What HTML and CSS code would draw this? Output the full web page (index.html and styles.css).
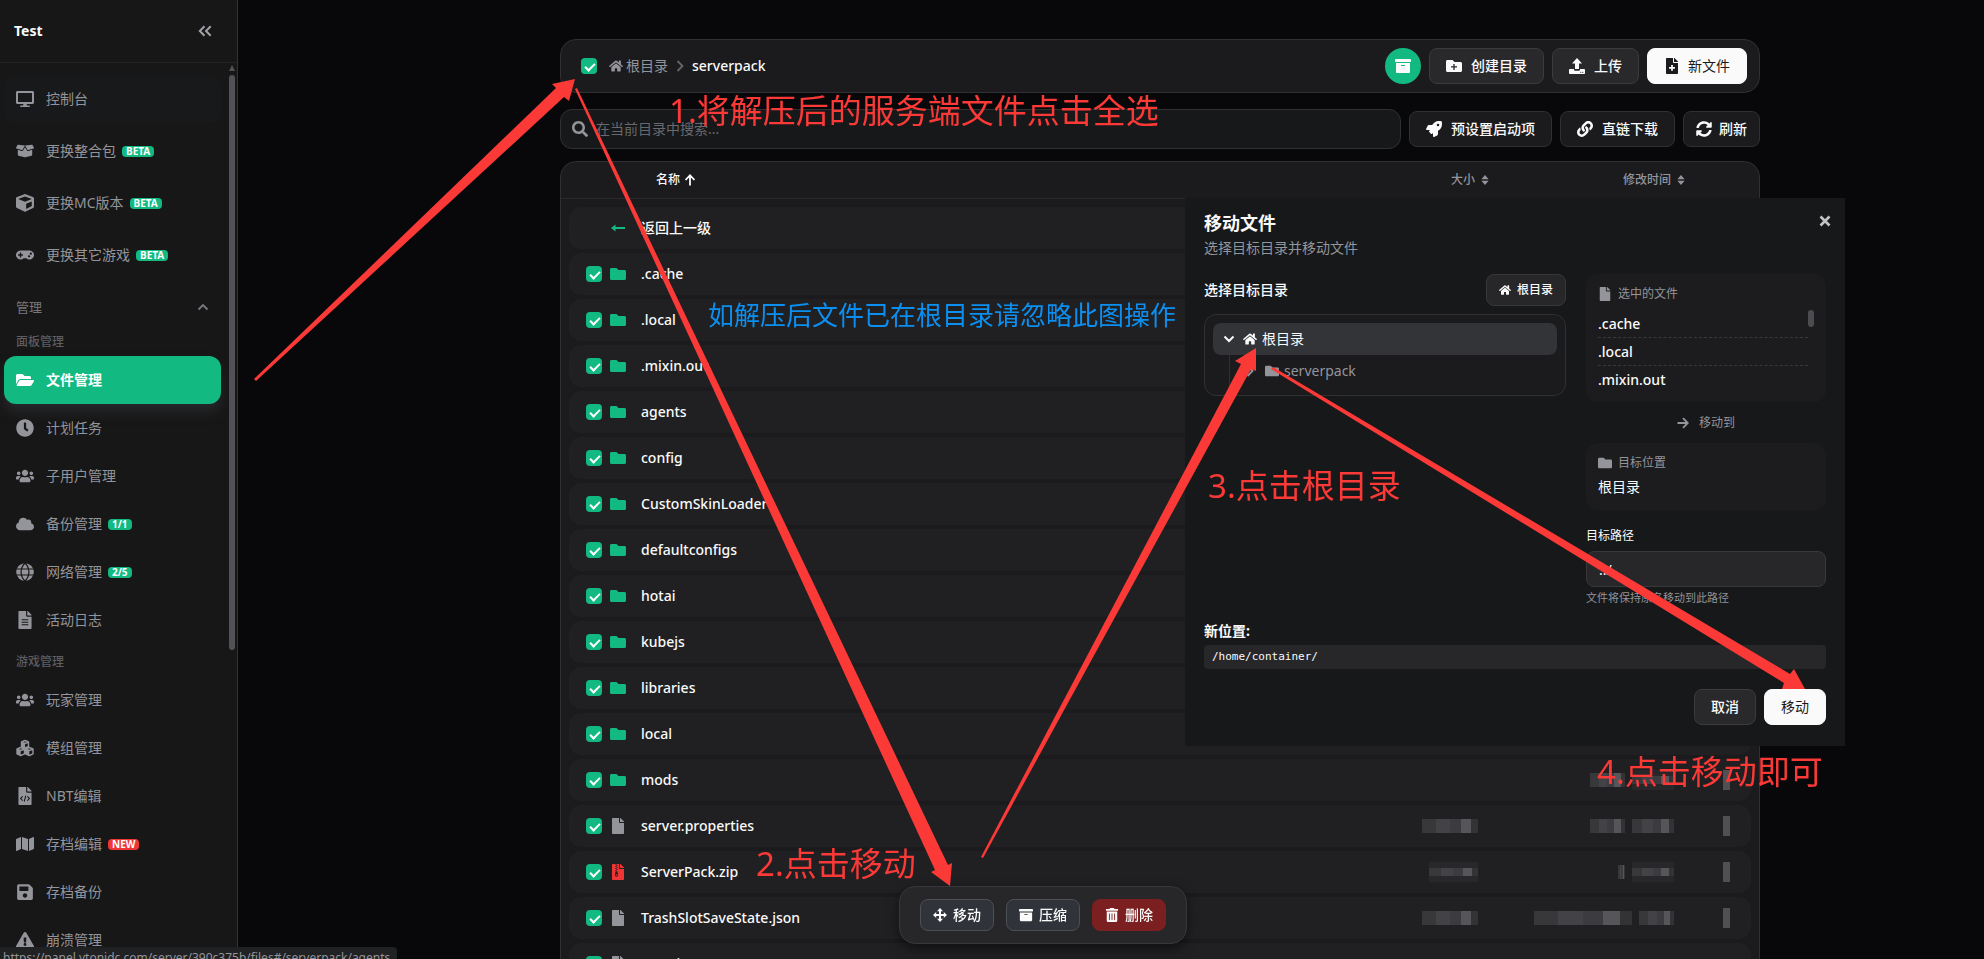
FILE: index.html
```html
<!DOCTYPE html>
<html lang="zh-CN">
<head>
<meta charset="utf-8">
<title>文件管理</title>
<link rel="stylesheet" href="styles.css">
</head>
<body>
<svg class="sprite" aria-hidden="true">
<symbol id="desktop" viewBox="0 0 576 512"><path d="M528 0H48C21.500 0 0 21.500 0 48v320c0 26.500 21.500 48 48 48h192l-16 48h-72c-13.300 0-24 10.700-24 24s10.700 24 24 24h272c13.300 0 24-10.700 24-24s-10.700-24-24-24h-72l-16-48h192c26.500 0 48-21.500 48-48V48c0-26.500-21.500-48-48-48zm-16 352H64V64h448v288z"/></symbol>
<symbol id="box" viewBox="0 0 640 512"><path d="M425.7 256c-16.9 0-32.8-9-41.4-23.400L320 126l-64.200 106.600c-8.700 14.500-24.600 23.500-41.500 23.500-4.500 0-9-.6-13.300-1.900L64 215v178c0 14.700 10 27.500 24.200 31l216.200 54.100c10.200 2.500 20.900 2.500 31 0L551.800 424c14.200-3.600 24.200-16.400 24.200-31V215l-137 39.100c-4.300 1.300-8.800 1.900-13.300 1.900zm212.600-112.200L586.800 41c-3.100-6.200-9.800-9.800-16.700-8.900L320 64l91.700 152.100c3.800 6.300 11.400 9.300 18.500 7.300l197.900-56.500c9.900-2.900 14.700-13.900 10.200-23.100zM53.200 41L1.700 143.800c-4.600 9.200.3 20.200 10.100 23l197.900 56.500c7.100 2 14.700-1 18.500-7.300L320 64 69.800 32.100c-6.900-.8-13.500 2.700-16.600 8.900z"/></symbol>
<symbol id="cube" viewBox="0 0 512 512"><path d="M239.1 6.3l-208 78c-18.700 7-31.100 25-31.100 45v225.100c0 18.200 10.300 34.800 26.500 42.900l208 104c13.500 6.800 29.400 6.800 42.900 0l208-104c16.300-8.100 26.500-24.800 26.500-42.900V129.300c0-20-12.400-37.900-31.100-44.900l-208-78C262 2.200 250 2.200 239.100 6.300zM256 68.400l192 72v1.100l-192 78-192-78v-1.100l192-72zm32 356V275.500l160-65v133.900l-160 80z"/></symbol>
<symbol id="gamepad" viewBox="0 0 640 512"><path d="M480.070 96H160a160 160 0 1 0 114.240 272h91.500A160 160 0 1 0 480.070 96zM248 268a12 12 0 0 1-12 12h-52v52a12 12 0 0 1-12 12h-24a12 12 0 0 1-12-12v-52H84a12 12 0 0 1-12-12v-24a12 12 0 0 1 12-12h52v-52a12 12 0 0 1 12-12h24a12 12 0 0 1 12 12v52h52a12 12 0 0 1 12 12zm216 76a40 40 0 1 1 40-40 40 40 0 0 1-40 40zm64-96a40 40 0 1 1 40-40 40 40 0 0 1-40 40z"/></symbol>
<symbol id="folder-open" viewBox="0 0 576 512"><path d="M572.694 292.093L500.270 416.248A63.997 63.997 0 0 1 444.989 448H45.025c-18.523 0-30.064-20.093-20.731-36.093l72.424-124.155A64 64 0 0 1 152 256h399.964c18.523 0 30.064 20.093 20.730 36.093zM152 224h328v-48c0-26.510-21.490-48-48-48H272l-64-64H48C21.490 64 0 85.490 0 112v278.046l69.077-118.418C86.214 242.250 117.989 224 152 224z"/></symbol>
<symbol id="clock" viewBox="0 0 512 512"><path d="M256,8C119,8,8,119,8,256S119,504,256,504,504,393,504,256,393,8,256,8Zm92.490,313h0l-20,25a16,16,0,0,1-22.490,2.500h0l-67-49.720a40,40,0,0,1-15-31.230V112a16,16,0,0,1,16-16h32a16,16,0,0,1,16,16V256l58,42.500A16,16,0,0,1,348.490,321Z"/></symbol>
<symbol id="users" viewBox="0 0 640 512"><path d="M96 224c35.300 0 64-28.700 64-64s-28.700-64-64-64-64 28.700-64 64 28.700 64 64 64zm448 0c35.300 0 64-28.700 64-64s-28.700-64-64-64-64 28.700-64 64 28.700 64 64 64zm32 32h-64c-17.600 0-33.500 7.100-45.100 18.600 40.300 22.100 68.900 62 75.100 109.400h66c17.700 0 32-14.300 32-32v-32c0-35.300-28.700-64-64-64zm-256 0c61.900 0 112-50.100 112-112S381.900 32 320 32 208 82.100 208 144s50.100 112 112 112zm76.800 32h-8.300c-20.800 10-43.900 16-68.500 16s-47.600-6-68.500-16h-8.300C179.600 288 128 339.600 128 403.200V432c0 26.500 21.500 48 48 48h288c26.500 0 48-21.500 48-48v-28.800c0-63.600-51.600-115.200-115.200-115.200zm-223.700-13.400C161.500 263.100 145.600 256 128 256H64c-35.300 0-64 28.700-64 64v32c0 17.700 14.300 32 32 32h65.900c6.300-47.400 34.900-87.300 75.200-109.400z"/></symbol>
<symbol id="cloud" viewBox="0 0 640 512"><path d="M537.6 226.600c4.100-10.700 6.400-22.400 6.400-34.600 0-53-43-96-96-96-19.700 0-38.100 6-53.300 16.200C367 64.200 315.300 32 256 32c-88.400 0-160 71.600-160 160 0 2.700.1 5.400.2 8.100C40.200 219.800 0 273.200 0 336c0 79.500 64.500 144 144 144h368c70.700 0 128-57.300 128-128 0-61.900-44-113.600-102.400-125.400z"/></symbol>
<symbol id="globe" viewBox="0 0 18 18"><circle cx="9" cy="9" r="8.800"/><path d="M0 6h18M0 12h18M9 0C3.800 5 3.800 13 9 18M9 0c5.200 5 5.200 13 0 18" fill="none" stroke="#171717" stroke-width="1.200"/></symbol>
<symbol id="file" viewBox="0 0 384 512"><path d="M224 136V0H24C10.700 0 0 10.700 0 24v464c0 13.300 10.700 24 24 24h336c13.300 0 24-10.700 24-24V160H248c-13.200 0-24-10.800-24-24zm160-14.100v6.100H256V0h6.100c6.400 0 12.500 2.500 17 7l97.900 98c4.500 4.500 7 10.600 7 16.900z"/></symbol>
<symbol id="file-text" viewBox="0 0 384 512"><use href="#file" width="384" height="512"/><path d="M96 248h192M96 320h192M96 392h192" fill="none" stroke="#171717" stroke-width="32"/></symbol>
<symbol id="file-code" viewBox="0 0 384 512"><use href="#file" width="384" height="512"/><path d="M125 270l-60 60 60 60M259 270l60 60-60 60M215 245l-46 170" fill="none" stroke="#171717" stroke-width="30"/></symbol>
<symbol id="file-plus" viewBox="0 0 384 512"><use href="#file" width="384" height="512"/><path d="M192 220v190M97 315h190" fill="none" stroke="#fafafa" stroke-width="56"/></symbol>
<symbol id="file-zip" viewBox="0 0 384 512"><use href="#file" width="384" height="512"/><path d="M128 0v32M160 32v32M128 64v32M160 96v32M128 128v32M160 160v32M128 192v32" fill="none" stroke="#202022" stroke-width="36"/><path d="M115 235h56l24 110a52 52 0 1 1-102 0zM142 325a32 22 0 1 0 1 0z" fill="#202022" fill-rule="evenodd"/></symbol>
<symbol id="cubes" viewBox="0 0 18 18"><g fill="none" stroke="currentColor" stroke-width="1.400" stroke-linejoin="round"><path d="M5.500 3L9 1.500 12.500 3v4.500L9 9 5.500 7.500zM5.500 3L9 4.500 12.500 3"/><path d="M1 10l3.700-1.500L8.500 10v4.800l-3.800 1.700L1 14.800zM1 10l3.700 1.500L8.500 10"/><path d="M9.500 10l3.800-1.500L17 10v4.800l-3.700 1.700-3.800-1.700zM9.500 10l3.800 1.500L17 10"/></g><path d="M5.500 3L9 4.500V9L5.500 7.500zM1 10l3.700 1.500v5L1 14.800zM9.500 10l3.800 1.500v5l-3.800-1.700z"/></symbol>
<symbol id="map" viewBox="0 0 576 512"><path d="M0 117.660v346.320c0 11.320 11.430 19.060 21.940 14.860L160 416V32L20.120 87.950A32.006 32.006 0 0 0 0 117.660zM192 416l192 64V96L192 32v384zM554.060 33.160L416 96v384l139.880-55.950A31.996 31.996 0 0 0 576 394.340V48.020c0-11.320-11.430-19.060-21.940-14.860z"/></symbol>
<symbol id="save" viewBox="0 0 448 512"><path d="M433.941 129.941l-83.882-83.882A48 48 0 0 0 316.118 32H48C21.490 32 0 53.490 0 80v352c0 26.510 21.490 48 48 48h352c26.510 0 48-21.490 48-48V163.882a48 48 0 0 0-14.059-33.941zM224 416c-35.346 0-64-28.654-64-64 0-35.346 28.654-64 64-64s64 28.654 64 64c0 35.346-28.654 64-64 64zm96-304.520V212c0 6.627-5.373 12-12 12H76c-6.627 0-12-5.373-12-12V108c0-6.627 5.373-12 12-12h228.520c3.183 0 6.235 1.264 8.485 3.515l3.480 3.480A11.996 11.996 0 0 1 320 111.480z"/></symbol>
<symbol id="warn" viewBox="0 0 576 512"><path d="M569.517 440.013C587.975 472.007 564.806 512 527.940 512H48.054c-36.937 0-59.999-40.055-41.577-71.987L246.423 23.985c18.467-32.009 64.720-31.951 83.154 0l239.940 416.028zM288 354c-25.405 0-46 20.595-46 46s20.595 46 46 46 46-20.595 46-46-20.595-46-46-46zm-43.673-165.346l7.418 136c.347 6.364 5.609 11.346 11.982 11.346h48.546c6.373 0 11.635-4.982 11.982-11.346l7.418-136c.375-6.874-5.098-12.654-11.982-12.654h-63.383c-6.884 0-12.356 5.780-11.981 12.654z"/></symbol>
<symbol id="folder" viewBox="0 0 512 512"><path d="M464 128H272l-64-64H48C21.490 64 0 85.490 0 112v288c0 26.510 21.490 48 48 48h416c26.510 0 48-21.490 48-48V176c0-26.510-21.490-48-48-48z"/></symbol>
<symbol id="folder-plus" viewBox="0 0 512 512"><use href="#folder" width="512" height="512"/><path d="M256 190v192M160 286h192" fill="none" stroke="#29292c" stroke-width="42"/></symbol>
<symbol id="home" viewBox="0 0 576 512"><path d="M280.370 148.260L96 300.110V464a16 16 0 0 0 16 16l112.060-.29a16 16 0 0 0 15.920-16V368a16 16 0 0 1 16-16h64a16 16 0 0 1 16 16v95.640a16 16 0 0 0 16 16.050L464 480a16 16 0 0 0 16-16V300L295.670 148.260a12.190 12.190 0 0 0-15.300 0zM571.600 251.470L488 182.560V44.050a12 12 0 0 0-12-12h-56a12 12 0 0 0-12 12v72.610L318.470 43a48 48 0 0 0-61 0L4.340 251.470a12 12 0 0 0-1.600 16.900l25.500 31A12 12 0 0 0 45.150 301l235.220-193.740a12.190 12.190 0 0 1 15.300 0L530.900 301a12 12 0 0 0 16.900-1.600l25.500-31a12 12 0 0 0-1.700-16.930z"/></symbol>
<symbol id="archive" viewBox="0 0 512 512"><path d="M32 448c0 17.700 14.300 32 32 32h384c17.700 0 32-14.300 32-32V160H32v288zm160-212c0-6.600 5.400-12 12-12h104c6.600 0 12 5.400 12 12v8c0 6.600-5.400 12-12 12H204c-6.600 0-12-5.400-12-12v-8zM480 32H32C14.300 32 0 46.300 0 64v48c0 8.800 7.200 16 16 16h480c8.800 0 16-7.200 16-16V64c0-17.700-14.300-32-32-32z"/></symbol>
<symbol id="search" viewBox="0 0 512 512"><path d="M505 442.700L405.300 343c-4.500-4.500-10.600-7-17-7H372c27.600-35.300 44-79.700 44-128C416 93.100 322.900 0 208 0S0 93.100 0 208s93.100 208 208 208c48.300 0 92.700-16.400 128-44v16.300c0 6.400 2.500 12.500 7 17l99.700 99.700c9.400 9.400 24.600 9.400 33.900 0l28.300-28.300c9.400-9.400 9.400-24.600.1-34zM208 336c-70.700 0-128-57.200-128-128 0-70.700 57.200-128 128-128 70.700 0 128 57.200 128 128 0 70.700-57.200 128-128 128z"/></symbol>
<symbol id="upload" viewBox="0 0 16 16"><path d="M8 0l5 5.500H10V11H6V5.500H3zM.8 11H5v.8a1 1 0 0 0 1 1h4a1 1 0 0 0 1-1V11h4.200a.8.800 0 0 1 .8.800v3.400a.8.800 0 0 1-.8.800H.8a.8.800 0 0 1-.8-.8v-3.400A.8.800 0 0 1 .8 11zm11 2.700a.6.600 0 1 0 .01 0zm2 0a.6.600 0 1 0 .01 0z"/></symbol>
<symbol id="rocket" viewBox="0 0 512 512"><path d="M505.120 19.094c-1.189-5.531-6.658-11-12.207-12.188C460.716 0 435.507 0 410.407 0 307.175 0 245.269 55.203 199.052 128H94.838c-16.348.016-35.557 11.875-42.887 26.484L2.516 253.297A28.400 28.400 0 0 0 0 264a24 24 0 0 0 24 24h103.816l-22.475 22.469c-11.365 11.361-12.996 32.258 0 45.250l50.905 50.906c11.156 11.188 32.156 13.156 45.277 0l22.475-22.469V488a24 24 0 0 0 24 24 28.560 28.560 0 0 0 10.707-2.516l98.728-49.390c14.629-7.297 26.508-26.500 26.508-42.860V312.797c72.598-46.313 128.035-108.406 128.035-211.094.1-25.203.1-50.406-6.856-82.609zM384.040 168A40 40 0 1 1 424.050 128 40 40 0 0 1 384.040 168z"/></symbol>
<symbol id="link" viewBox="0 0 512 512"><path d="M326.612 185.391c59.747 59.809 58.927 155.698.36 214.590-.11.12-.24.25-.36.37l-67.200 67.200c-59.270 59.270-155.699 59.262-214.960 0-59.270-59.260-59.270-155.700 0-214.960l37.106-37.106c9.840-9.840 26.786-3.300 27.294 10.606.648 17.722 3.826 35.527 9.690 52.721 1.986 5.822.567 12.262-3.783 16.612l-13.087 13.087c-28.026 28.026-28.905 73.660-1.155 101.960 28.024 28.579 74.086 28.749 102.325.51l67.200-67.190c28.191-28.191 28.073-73.757 0-101.830-3.701-3.694-7.429-6.564-10.341-8.569a16.037 16.037 0 0 1-6.947-12.606c-.396-10.567 3.348-21.456 11.698-29.806l21.054-21.055c5.521-5.521 14.182-6.199 20.584-1.731a152.482 152.482 0 0 1 20.522 17.197zM467.547 44.449c-59.261-59.262-155.690-59.270-214.960 0l-67.200 67.200c-.12.12-.25.25-.36.37-58.566 58.892-59.387 154.781.36 214.590a152.454 152.454 0 0 0 20.521 17.196c6.402 4.468 15.064 3.789 20.584-1.731l21.054-21.055c8.350-8.350 12.094-19.239 11.698-29.806a16.037 16.037 0 0 0-6.947-12.606c-2.912-2.005-6.640-4.875-10.341-8.569-28.073-28.073-28.191-73.639 0-101.830l67.200-67.190c28.239-28.239 74.300-28.069 102.325.51 27.750 28.300 26.872 73.934-1.155 101.960l-13.087 13.087c-4.350 4.350-5.769 10.790-3.783 16.612 5.864 17.194 9.042 34.999 9.690 52.721.509 13.906 17.454 20.446 27.294 10.606l37.106-37.106c59.271-59.259 59.271-155.699.001-214.959z"/></symbol>
<symbol id="sync" viewBox="0 0 512 512"><path d="M370.720 133.280C339.458 104.008 298.888 87.962 255.848 88c-77.458.068-144.328 53.178-162.791 126.850-1.344 5.363-6.122 9.150-11.651 9.150H24.103c-7.498 0-13.194-6.807-11.807-14.176C33.933 94.924 134.813 8 256 8c66.448 0 126.791 26.136 171.315 68.685L463.030 40.970C478.149 25.851 504 36.559 504 57.941V192c0 13.255-10.745 24-24 24H345.941c-21.382 0-32.090-25.851-16.971-40.971l41.750-41.749zM32 296h134.059c21.382 0 32.090 25.851 16.971 40.971l-41.750 41.750c31.262 29.273 71.835 45.319 114.876 45.280 77.418-.07 144.315-53.144 162.787-126.849 1.344-5.363 6.122-9.150 11.651-9.150h57.304c7.498 0 13.194 6.807 11.807 14.176C478.067 417.076 377.187 504 256 504c-66.448 0-126.791-26.136-171.315-68.685L48.970 471.030C33.851 486.149 8 475.441 8 454.059V320c0-13.255 10.745-24 24-24z"/></symbol>
<symbol id="trash" viewBox="0 0 448 512"><path d="M32 464a48 48 0 0 0 48 48h288a48 48 0 0 0 48-48V128H32zm272-256a16 16 0 0 1 32 0v224a16 16 0 0 1-32 0zm-96 0a16 16 0 0 1 32 0v224a16 16 0 0 1-32 0zm-96 0a16 16 0 0 1 32 0v224a16 16 0 0 1-32 0zM432 32H312l-9.400-18.700A24 24 0 0 0 281.100 0H166.800a23.720 23.720 0 0 0-21.400 13.300L136 32H16A16 16 0 0 0 0 48v32a16 16 0 0 0 16 16h416a16 16 0 0 0 16-16V48a16 16 0 0 0-16-16z"/></symbol>
<symbol id="move" viewBox="0 0 14 14"><path d="M7 0l3 3.200H8v2.800h2.800V4L14 7l-3.200 3V8H8v2.800h2L7 14l-3-3.200h2V8H3.200v2L0 7l3.200-3v2H6V3.200H4z"/></symbol>
<symbol id="sort" viewBox="0 0 8 10"><path d="M4 0l3.600 4.200H.4zM4 10L.4 5.800h7.200z"/></symbol>
<symbol id="arrow-up" viewBox="0 0 12 12"><path d="M6 11.500V1.500M1.500 6L6 1.300 10.500 6" fill="none" stroke="currentColor" stroke-width="1.800"/></symbol>
<symbol id="arrow-right" viewBox="0 0 12 12"><path d="M.5 6h10M6 1.200L10.800 6 6 10.800" fill="none" stroke="currentColor" stroke-width="1.800"/></symbol>
<symbol id="arrow-back" viewBox="0 0 16 16"><path d="M5.500 4.500v2.400H15v2.200H5.500v2.400L1 8z"/></symbol>
<symbol id="chev-right" viewBox="0 0 8 12"><path d="M1.500 1l5 5-5 5" fill="none" stroke="currentColor" stroke-width="1.800"/></symbol>
<symbol id="chev-down" viewBox="0 0 12 8"><path d="M1.500 1.500L6 6l4.500-4.500" fill="none" stroke="currentColor" stroke-width="2"/></symbol>
<symbol id="chev-up" viewBox="0 0 12 8"><path d="M1.500 6.500L6 2l4.500 4.500" fill="none" stroke="currentColor" stroke-width="1.800"/></symbol>
<symbol id="collapse" viewBox="0 0 14 12"><path d="M6.500 1.200L1.800 6l4.700 4.800M12.700 1.200L8 6l4.700 4.800" fill="none" stroke="currentColor" stroke-width="2"/></symbol>
<symbol id="close" viewBox="0 0 12 12"><path d="M1.500 1.500l9 9M10.500 1.500l-9 9" fill="none" stroke="currentColor" stroke-width="2.600"/></symbol>
</svg>

<aside class="sidebar">
  <header class="side-head"><strong>Test</strong><button class="plain" aria-label="收起"><svg class="i-collapse"><use href="#collapse"/></svg></button></header>
  <nav class="nav">
    <div class="group group-top">
      <a class="item hover" href="#"><svg><use href="#desktop"/></svg>控制台</a>
      <a class="item" href="#"><svg><use href="#box"/></svg>更换整合包<span class="tag">BETA</span></a>
      <a class="item" href="#"><svg><use href="#cube"/></svg>更换MC版本<span class="tag">BETA</span></a>
      <a class="item" href="#"><svg><use href="#gamepad"/></svg>更换其它游戏<span class="tag">BETA</span></a>
    </div>
    <button class="section">管理<svg><use href="#chev-up"/></svg></button>
    <h2 class="label">面板管理</h2>
    <div class="group">
      <a class="item active" href="#"><svg><use href="#folder-open"/></svg>文件管理</a>
      <a class="item" href="#"><svg><use href="#clock"/></svg>计划任务</a>
      <a class="item" href="#"><svg><use href="#users"/></svg>子用户管理</a>
      <a class="item" href="#"><svg><use href="#cloud"/></svg>备份管理<span class="tag">1/1</span></a>
      <a class="item" href="#"><svg><use href="#globe"/></svg>网络管理<span class="tag">2/5</span></a>
      <a class="item" href="#"><svg><use href="#file-text"/></svg>活动日志</a>
    </div>
    <h2 class="label second">游戏管理</h2>
    <div class="group">
      <a class="item" href="#"><svg><use href="#users"/></svg>玩家管理</a>
      <a class="item" href="#"><svg><use href="#cubes"/></svg>模组管理</a>
      <a class="item" href="#"><svg><use href="#file-code"/></svg>NBT编辑</a>
      <a class="item" href="#"><svg><use href="#map"/></svg>存档编辑<span class="tag new">NEW</span></a>
      <a class="item" href="#"><svg><use href="#save"/></svg>存档备份</a>
      <a class="item" href="#"><svg><use href="#warn"/></svg>崩溃管理</a>
    </div>
  </nav>
  <div class="scroll"></div>
</aside>

<main class="main">
  <div class="container">
    <section class="toolbar">
      <input type="checkbox" class="check" checked aria-label="全选">
      <nav class="crumbs"><a href="#"><svg class="i-home"><use href="#home"/></svg>根目录</a><svg class="i-sep"><use href="#chev-right"/></svg><span>serverpack</span></nav>
      <button class="round" aria-label="归档"><svg><use href="#archive"/></svg></button>
      <button class="btn"><svg><use href="#folder-plus"/></svg>创建目录</button>
      <button class="btn"><svg><use href="#upload"/></svg>上传</button>
      <button class="btn light"><svg><use href="#file-plus"/></svg>新文件</button>
    </section>
    <section class="filters">
      <label class="search"><svg><use href="#search"/></svg><input type="text" placeholder="在当前目录中搜索..." aria-label="搜索"></label>
      <button class="btn dark"><svg><use href="#rocket"/></svg>预设置启动项</button>
      <button class="btn dark"><svg><use href="#link"/></svg>直链下载</button>
      <button class="btn dark tight"><svg><use href="#sync"/></svg>刷新</button>
    </section>
    <table class="files">
      <thead><tr><th class="on">名称<svg class="i-up"><use href="#arrow-up"/></svg></th><th>大小<svg><use href="#sort"/></svg></th><th>修改时间<svg><use href="#sort"/></svg></th><th></th></tr></thead>
      <tbody>
        <tr><td><span class="gap"></span><svg class="green"><use href="#arrow-back"/></svg><a href="#">返回上一级</a></td></tr>
        <tr><td><input type="checkbox" class="check" checked aria-label=".cache"><svg class="green"><use href="#folder"/></svg><a href="#">.cache</a></td></tr>
        <tr><td><input type="checkbox" class="check" checked aria-label=".local"><svg class="green"><use href="#folder"/></svg><a href="#">.local</a></td></tr>
        <tr><td><input type="checkbox" class="check" checked aria-label=".mixin.out"><svg class="green"><use href="#folder"/></svg><a href="#">.mixin.out</a></td></tr>
        <tr><td><input type="checkbox" class="check" checked aria-label="agents"><svg class="green"><use href="#folder"/></svg><a href="#">agents</a></td></tr>
        <tr><td><input type="checkbox" class="check" checked aria-label="config"><svg class="green"><use href="#folder"/></svg><a href="#">config</a></td></tr>
        <tr><td><input type="checkbox" class="check" checked aria-label="CustomSkinLoader"><svg class="green"><use href="#folder"/></svg><a href="#">CustomSkinLoader</a></td></tr>
        <tr><td><input type="checkbox" class="check" checked aria-label="defaultconfigs"><svg class="green"><use href="#folder"/></svg><a href="#">defaultconfigs</a></td></tr>
        <tr><td><input type="checkbox" class="check" checked aria-label="hotai"><svg class="green"><use href="#folder"/></svg><a href="#">hotai</a></td></tr>
        <tr><td><input type="checkbox" class="check" checked aria-label="kubejs"><svg class="green"><use href="#folder"/></svg><a href="#">kubejs</a></td></tr>
        <tr><td><input type="checkbox" class="check" checked aria-label="libraries"><svg class="green"><use href="#folder"/></svg><a href="#">libraries</a></td></tr>
        <tr><td><input type="checkbox" class="check" checked aria-label="local"><svg class="green"><use href="#folder"/></svg><a href="#">local</a></td></tr>
        <tr><td><input type="checkbox" class="check" checked aria-label="mods"><svg class="green"><use href="#folder"/></svg><a href="#">mods</a></td><td></td><td><i class="blur w35"></i><i class="blur w42 mid"></i></td><td><i class="blur dots"></i></td></tr>
        <tr><td><input type="checkbox" class="check" checked aria-label="server.properties"><svg><use href="#file"/></svg><a href="#">server.properties</a></td><td><i class="blur w56"></i></td><td><i class="blur w35"></i><i class="blur w42"></i></td><td><i class="blur dots"></i></td></tr>
        <tr><td><input type="checkbox" class="check" checked aria-label="ServerPack.zip"><svg class="red"><use href="#file-zip"/></svg><a href="#">ServerPack.zip</a></td><td><i class="blur w49 mid"></i></td><td><i class="blur w7"></i><i class="blur w42 mid"></i></td><td><i class="blur dots"></i></td></tr>
        <tr><td><input type="checkbox" class="check" checked aria-label="TrashSlotSaveState.json"><svg><use href="#file"/></svg><a href="#">TrashSlotSaveState.json</a></td><td><i class="blur w56"></i></td><td><i class="blur w98"></i><i class="blur w35"></i></td><td><i class="blur dots"></i></td></tr>
        <tr><td><input type="checkbox" class="check" checked aria-label="user_jvm_args.txt"><svg><use href="#file"/></svg><a href="#">user_jvm_args.txt</a></td></tr>
      </tbody>
    </table>
  </div>
</main>

<div class="actions">
  <button class="act"><svg><use href="#move"/></svg>移动</button>
  <button class="act"><svg><use href="#archive"/></svg>压缩</button>
  <button class="act danger"><svg><use href="#trash"/></svg>删除</button>
</div>

<section class="modal" role="dialog" aria-labelledby="modal-title">
  <header class="modal-head">
    <div><h1 id="modal-title">移动文件</h1><p>选择目标目录并移动文件</p></div>
    <button class="plain" aria-label="关闭"><svg class="i-close"><use href="#close"/></svg></button>
  </header>
  <div class="cols">
    <div>
      <div class="pick"><span>选择目标目录</span><button class="act home"><svg><use href="#home"/></svg>根目录</button></div>
      <ul class="tree">
        <li><button class="node on"><svg class="i-chev"><use href="#chev-down"/></svg><svg><use href="#home"/></svg>根目录</button>
          <ul><li><button class="node"><svg class="i-next"><use href="#chev-right"/></svg><svg><use href="#folder"/></svg>serverpack</button></li></ul></li>
      </ul>
    </div>
    <div class="side">
      <div class="card">
        <h3><svg><use href="#file"/></svg>选中的文件</h3>
        <ul class="picked"><li>.cache</li><li>.local</li><li>.mixin.out</li></ul>
      </div>
      <p class="to"><svg><use href="#arrow-right"/></svg>移动到</p>
      <div class="card target"><h3><svg><use href="#folder"/></svg>目标位置</h3><p>根目录</p></div>
      <label class="path-label" for="path">目标路径</label>
      <input class="path" id="path" type="text" value="../">
      <p class="help">文件将保持原名移动到此路径</p>
    </div>
  </div>
  <h4>新位置:</h4>
  <code>/home/container/</code>
  <footer><button class="btn">取消</button><button class="btn light">移动</button></footer>
</section>

<div class="status">https://panel.ytonidc.com/server/390c375b/files#/serverpack/agents</div>

<svg class="arrows" aria-hidden="true">
  <path d="M254 379L556 88 552 84 575 79 569 101 564 97 256 381z"/>
  <path d="M577 88L948 865 952 863 950 886 931 872 935 870 575 89z"/>
  <path d="M981 857L1241 364 1235 361 1256 348 1256 371 1251 369 983 858z"/>
  <path d="M1273 367L1790 674 1794 669 1805 689 1782 689 1784 683 1271 369z"/>
</svg>
<p class="note n1">1.将解压后的服务端文件点击全选</p>
<p class="note n2">2.点击移动</p>
<p class="note n3">3.点击根目录</p>
<p class="note n4">4.点击移动即可</p>
<p class="note tip">如解压后文件已在根目录请忽略此图操作</p>
</body>
</html>
```
FILE: styles.css
```css
* { box-sizing: border-box; }
body, h1, h2, h3, h4, p, ul { margin: 0; padding: 0; }
ul { list-style: none; }
body {
  display: flex;
  height: 100vh;
  overflow: hidden;
  background: #08080a;
  color: #fafafa;
  font: 14px/20px "Noto Sans", "Noto Sans CJK SC", sans-serif;
}
a { color: inherit; text-decoration: none; }
button, input { font: inherit; color: inherit; margin: 0; }
svg { fill: currentColor; flex: none; }
.sprite { position: absolute; width: 0; height: 0; }
.plain { border: 0; padding: 0; background: none; color: #a1a1aa; display: flex; }

/* sidebar */
.sidebar {
  position: relative;
  flex: none;
  display: flex;
  flex-direction: column;
  width: 238px;
  background: #171717;
  border-right: 1px solid #323236;
}
.side-head {
  flex: none;
  display: flex;
  align-items: center;
  justify-content: space-between;
  height: 63px;
  padding: 0 25px 0 14px;
  border-bottom: 1px solid #222225;
}
.i-collapse { width: 14px; height: 12px; }
.nav { flex: 1; overflow: hidden; padding: 12px 16px 0 4px; }
.group { display: flex; flex-direction: column; }
.group-top { gap: 4px; }
.item {
  flex: none;
  display: flex;
  align-items: center;
  height: 48px;
  padding-left: 12px;
  border-radius: 12px;
  color: #94949b;
}
.item svg { width: 18px; height: 18px; margin-right: 12px; }
.hover { background: #17191a; }
.active { background: #12b981; color: #fff; font-weight: 700; box-shadow: 0 8px 12px #26272a; }
.tag {
  margin-left: 6px;
  padding: 0 4px;
  border-radius: 4px;
  background: #12b981;
  color: #fff;
  font-size: 10px;
  line-height: 11px;
  font-weight: 700;
}
.new { background: #f03535; }
.section {
  display: flex;
  align-items: center;
  justify-content: space-between;
  width: 100%;
  height: 28px;
  margin-top: 14px;
  padding: 0 12px;
  border: 0;
  background: none;
  color: #77777d;
  font-size: 13px;
}
.section svg { width: 12px; height: 8px; }
.label { height: 16px; margin: 13px 0 6px; padding-left: 12px; font-size: 12px; line-height: 16px; font-weight: 500; color: #5c5c62; }
.second { margin: 10px 0 6px; }
.scroll { position: absolute; top: 75px; right: 2px; width: 6px; height: 60%; border-radius: 3px; background: #525256; }
.scroll::before { content: ""; position: absolute; top: -10px; border: 3px solid transparent; border-top: 0; border-bottom: 6px solid #525256; }

/* file manager */
.main { flex: 1; padding: 39px 24px 0 122px; overflow: hidden; }
.container { max-width: 1200px; margin: 0 auto; }
.toolbar {
  display: flex;
  align-items: center;
  gap: 8px;
  height: 54px;
  padding: 0 12px 0 20px;
  border: 1px solid #303033;
  border-radius: 16px;
  background: #1b1b1d;
}
.check {
  appearance: none;
  position: relative;
  flex: none;
  width: 16px;
  height: 16px;
  border-radius: 4px;
  background: #12b981;
}
.check::after {
  content: "";
  position: absolute;
  left: 6px;
  top: 3px;
  width: 4px;
  height: 8px;
  border: solid #fff;
  border-width: 0 2px 2px 0;
  transform: rotate(45deg);
}
.crumbs { flex: 1; display: flex; align-items: center; gap: 8px; margin-left: 4px; }
.crumbs span { font-weight: 500; }
.crumbs a { display: flex; align-items: center; gap: 3px; color: #94949b; }
.crumbs .i-sep { color: #66666c; }
.i-home { width: 14px; height: 14px; }
.i-sep { width: 8px; height: 12px; }
.btn {
  display: flex;
  align-items: center;
  gap: 9px;
  height: 36px;
  padding: 0 16px;
  border: 1px solid #3b3b3f;
  border-radius: 8px;
  background: #29292c;
  font-weight: 500;
  white-space: nowrap;
}
.btn svg { width: 16px; height: 16px; }
.light { gap: 8px; background: #fafafa; border-color: #fafafa; color: #1b1b1d; font-weight: 400; }
.dark { background: #1b1b1d; border-color: #303033; }
.tight { padding: 0 12px; gap: 7px; }
.round { display: flex; padding: 10px; border: 0; border-radius: 50%; background: #12b981; }
.round svg { width: 16px; height: 16px; }
.filters { display: flex; align-items: center; gap: 8px; margin: 16px 0 12px; }
.search {
  flex: 1;
  display: flex;
  align-items: center;
  gap: 8px;
  height: 40px;
  padding: 0 11px;
  border: 1px solid #303033;
  border-radius: 12px;
  background: #17181a;
  color: #94949b;
}
.search svg { width: 16px; height: 16px; }
.search input { flex: 1; border: 0; padding: 0; background: none; outline: 0; }
.search input::placeholder { color: #68686e; opacity: 1; }
.files { display: block; border: 1px solid #303033; border-radius: 16px 16px 0 0; background: #1b1b1d; }
.files thead, .files tbody { display: block; }
.files tr { display: grid; grid-template-columns: 1fr 200px 196px 77px; align-items: center; }
.files thead tr { height: 37px; padding: 0 0 0 95px; border-bottom: 1px solid #29292c; grid-template-columns: 1fr 200px 196px 74px; }
.files th { display: flex; align-items: center; justify-content: flex-end; gap: 6px; padding: 0; font-size: 12px; font-weight: 500; color: #94949b; }
.files th svg { width: 8px; height: 10px; }
.files .on { justify-content: flex-start; gap: 4px; color: #fafafa; }
.files .on svg { width: 12px; height: 12px; }
.files tbody { padding: 8px; }
.files tbody tr { height: 42px; margin-bottom: 4px; border-radius: 12px; background: #202022; }
.files td { display: flex; align-items: center; justify-content: flex-end; gap: 7px; padding: 0; }
.files td:first-child { justify-content: flex-start; gap: 8px; padding-left: 17px; }
.files td svg { width: 16px; height: 16px; color: #94949b; }
.files td .green { color: #12b981; }
.files td .red { color: #f03535; }
.files a { margin-left: 7px; font-weight: 500; }
.gap { width: 16px; }
.blur { height: 14px; background: linear-gradient(90deg, #38383b 0 25%, #434347 25% 50%, #3c3c40 50% 70%, #56565a 70% 88%, #333336 88%); }
.mid { height: 20px; border: solid #28282b; border-width: 6px 0; }
.w7 { width: 7px; }
.w35 { width: 35px; }
.w42 { width: 42px; }
.w49 { width: 49px; }
.w56 { width: 56px; }
.w98 { width: 98px; }
.dots { width: 7px; height: 20px; margin-right: 21px; background: #505054; }

/* bulk actions */
.actions {
  position: fixed;
  left: 899px;
  bottom: 15px;
  display: flex;
  gap: 12px;
  padding: 12px 20px;
  border: 1px solid #38383c;
  border-radius: 16px;
  background: #27272a;
  box-shadow: 0 4px 12px #0008;
}
.act {
  display: flex;
  align-items: center;
  gap: 6px;
  height: 32px;
  padding: 0 12px;
  border: 1px solid #4c4f54;
  border-radius: 8px;
  background: #303339;
  font-weight: 500;
}
.act svg { width: 14px; height: 14px; }
.danger { background: #7b1f20; border-color: #7b1f20; }

/* move dialog */
.modal { position: fixed; left: 1185px; top: 198px; width: 660px; padding: 13px 19px 21px; background: #17181a; }
.modal-head { display: flex; justify-content: space-between; align-items: flex-start; margin-bottom: 13px; }
.modal-head .plain { padding: 4px 0; margin-right: -5px; }
h1 { font-size: 18px; line-height: 24px; font-weight: 700; }
.modal-head p { line-height: 26px; color: #94949b; }
.i-close { width: 12px; height: 12px; color: #c4c4c8; }
.cols { display: grid; grid-template-columns: 1fr 240px; gap: 20px; }
.pick { display: flex; align-items: center; justify-content: space-between; margin-bottom: 8px; font-weight: 500; }
.home { background: #27272a; border-color: #38383c; font-size: 12px; }
.home svg { width: 12px; height: 12px; }
.tree { padding: 8px; border: 1px solid #303033; border-radius: 12px; background: #1b1b1d; }
.tree ul { margin-left: 16px; border-left: 1px solid #303033; }
.node {
  display: flex;
  align-items: center;
  gap: 5px;
  width: 100%;
  height: 32px;
  padding: 0 10px 0 14px;
  border: 0;
  border-radius: 8px;
  background: none;
  color: #94949b;
}
.node svg { width: 14px; height: 14px; }
.node.on { padding-left: 10px; background: #323438; color: #fafafa; }
.node .i-chev { width: 12px; height: 8px; margin-right: 3px; }
.node .i-next { width: 8px; height: 12px; margin: 0 6px 0 2px; }
.card { padding: 12px 12px 8px; border-radius: 12px; background: #1c1c1e; }
.card h3 { display: flex; align-items: center; gap: 6px; font-size: 12px; line-height: 16px; font-weight: 400; color: #94949b; }
.card h3 svg { width: 14px; height: 14px; }
.picked { position: relative; margin-top: 8px; padding-right: 6px; }
.picked li { height: 28px; line-height: 27px; border-bottom: 1px dashed #38383b; font-weight: 500; }
.picked li:last-child { border: 0; }
.picked::after { content: ""; position: absolute; right: 0; top: 0; width: 6px; height: 17px; border-radius: 3px; background: #4c4c50; }
.to { display: flex; align-items: center; justify-content: center; gap: 10px; height: 41px; font-size: 12px; color: #94949b; }
.to svg { width: 12px; height: 12px; }
.target p { padding: 4px 0 3px; line-height: 24px; }
.path-label { display: block; margin: 17px 0 6px; font-size: 12px; line-height: 18px; }
.path { width: 100%; height: 36px; padding: 0 12px; border: 1px solid #38383c; border-radius: 8px; background: #27272a; }
.help { margin-top: 2px; font-size: 11px; line-height: 18px; color: #94949b; }
h4 { margin: 14px 0 4px; font-size: 14px; line-height: 20px; }
.modal code { display: block; padding: 0 8px; border-radius: 4px; background: #27272a; font: 11px/24px "DejaVu Sans Mono", monospace; }
.modal footer { display: flex; justify-content: flex-end; gap: 8px; margin-top: 20px; }

/* link preview */
.status {
  position: fixed;
  left: 0;
  top: 947px;
  height: 24px;
  padding: 0 7px 0 3px;
  border-radius: 0 4px 0 0;
  background: #202123;
  color: #94949b;
  font-size: 12px;
  line-height: 22px;
}

/* guide annotations */
.arrows { position: fixed; left: 0; top: 0; width: 100%; height: 100%; fill: #fb3937; pointer-events: none; }
.note { position: fixed; color: #fb3937; font-size: 33px; line-height: 40px; white-space: nowrap; }
.n1 { left: 669px; top: 91px; }
.n2 { left: 756px; top: 844px; }
.n3 { left: 1208px; top: 466px; }
.n4 { left: 1597px; top: 752px; }
.tip { left: 708px; top: 295px; font-size: 26px; color: #0b8ff0; }
```
